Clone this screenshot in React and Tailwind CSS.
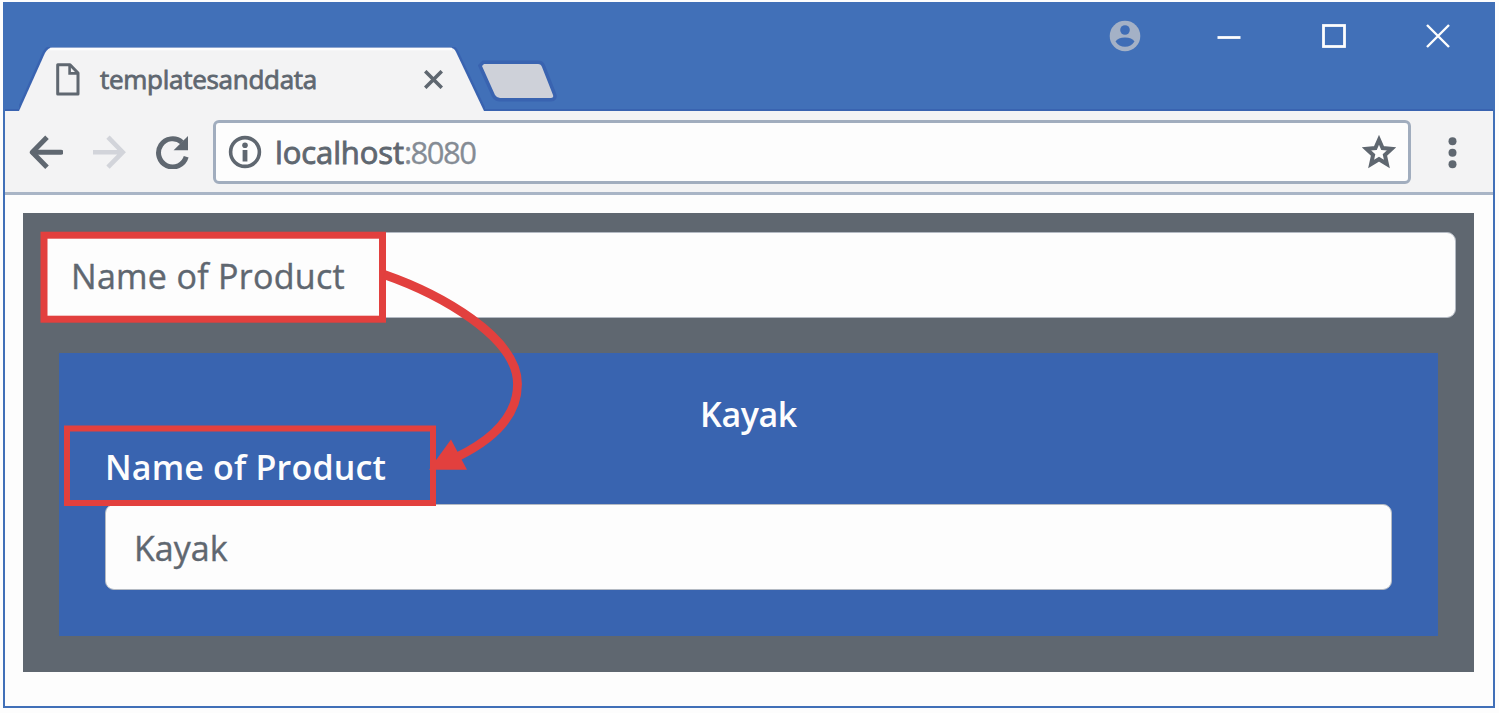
import React from "react";

function Tab() {
  return (
    <div className="relative ml-[14px] flex h-[64px] w-[466px] items-center">
      <svg className="absolute top-0 left-0" width="466" height="64" viewBox="0 0 466 64">
        <path d="M0 64 L26 6 Q29 0.8 33 0.8 H431 Q435 0.8 437 5 L465 64 Z" fill="#f3f3f4" stroke="#3963b0" strokeWidth="5" paintOrder="stroke" />
        <path d="M31 2 H433" stroke="#fdfdfd" strokeWidth="2.4" />
      </svg>
      <div className="relative flex w-full items-center">
        <svg className="ml-[37px] shrink-0" width="24" height="33" viewBox="0 0 24 33" fill="none" stroke="#5f6770" strokeWidth="3">
          <path d="M1.7 1.7 H14 L22 10 V31 H1.7 Z" strokeLinejoin="round" />
          <path d="M13.6 2 V10.4 H22" strokeWidth="2.6" />
        </svg>
        <span className="ml-[20px] w-[216px] text-[26px] leading-[32px] tracking-[-0.28px] whitespace-nowrap text-[#5f6770] [-webkit-text-stroke:0.8px_#5f6770]">templatesanddata</span>
        <svg className="ml-[108px] shrink-0" width="19" height="19" viewBox="0 0 19 19" stroke="#5f6770" strokeWidth="3.6">
          <path d="M1.2 1.2 L17.8 17.8 M17.8 1.2 L1.2 17.8" />
        </svg>
      </div>
    </div>
  );
}

function TitleBar() {
  return (
    <div className="flex h-[107px] items-end border-b-2 border-[#3963b0] bg-[#4170b8]">
      <div className="-mb-[2px] flex items-end">
        <Tab />
        <svg className="mb-[9px] -ml-[7px]" width="80" height="42" viewBox="0 0 80 42">
          <path d="M6 4 H60 Q63 4 64 7 L75 35 Q76 38 73 38 H22 Q19 38 17 35 L4 6 Z" fill="#ced1d9" stroke="#3963b0" strokeWidth="7" paintOrder="stroke" />
        </svg>
      </div>
      <div className="mr-[43px] mb-[57px] ml-auto flex items-center">
        <svg width="32" height="32" viewBox="0 0 32 32">
          <circle cx="16" cy="16" r="15.3" fill="#a4b1c6" />
          <circle cx="16" cy="10" r="4.8" fill="#3f6db6" />
          <path d="M6.5 21.5 Q9 17.6 16 17.6 Q23 17.6 25.5 21.5 Q22 26.8 16 26.8 Q10 26.8 6.5 21.5 Z" fill="#3f6db6" />
        </svg>
        <svg className="ml-[76px]" width="24" height="24" viewBox="0 0 24 24" stroke="#fdfdfd" strokeWidth="2.8"><path d="M0.5 13.5 H23.5" /></svg>
        <svg className="ml-[81px]" width="24" height="24" viewBox="0 0 24 24" fill="none" stroke="#fdfdfd" strokeWidth="2.8"><rect x="1.5" y="1.5" width="21" height="21" /></svg>
        <svg className="ml-[80px]" width="24" height="24" viewBox="0 0 24 24" stroke="#fdfdfd" strokeWidth="2.4"><path d="M1 1 L23 23 M23 1 L1 23" /></svg>
      </div>
    </div>
  );
}

function Toolbar() {
  return (
    <div className="flex h-[84px] items-center border-b-[3px] border-[#a9b5c6] bg-[#f3f3f4] text-[#5f6770]">
      <svg className="ml-[24px]" width="34" height="34" viewBox="0 0 34 34" fill="none" stroke="currentColor" strokeWidth="5" strokeLinejoin="round">
        <path d="M32 17.2 H4" strokeLinecap="round" />
        <path d="M18 2.2 L3.3 17.2 L18 32.2" />
      </svg>
      <svg className="ml-[29px] text-[#d2d4da]" width="34" height="34" viewBox="0 0 34 34" fill="none" stroke="currentColor" strokeWidth="4.6">
        <path d="M1 17.2 H30 M16 2.2 L30.7 17.2 L16 32.2" />
      </svg>
      <svg className="ml-[29px]" width="34" height="34" viewBox="0 0 34 34">
        <path d="M31.2 21.8 A14.1 14.1 0 1 1 27 7.3" fill="none" stroke="currentColor" strokeWidth="5" />
        <path d="M33 1 V15.2 H18.6 Z" fill="currentColor" />
      </svg>
      <div className="ml-[24px] flex h-[64px] w-[1198px] items-center rounded-[6px] border-[3px] border-[#a1adbe] bg-[#fdfdfd]">
        <svg className="ml-[12px] shrink-0" width="34" height="34" viewBox="0 0 34 34">
          <circle cx="17" cy="17" r="14.4" fill="none" stroke="currentColor" strokeWidth="3.6" />
          <circle cx="17" cy="10.2" r="2.8" fill="currentColor" />
          <path d="M17 15 V26.5" stroke="currentColor" strokeWidth="4.8" />
        </svg>
        <span className="ml-[13px] text-[31px] leading-[40px] whitespace-nowrap">
          <span className="tracking-[-0.1px] [-webkit-text-stroke:0.9px_#5f6770]">localhost</span>
          <span className="tracking-[-1.5px] text-[#858c95] [-webkit-text-stroke:0.3px_#858c95]">:8080</span>
        </span>
        <svg className="mr-[12px] ml-auto shrink-0" width="34" height="34" viewBox="0 0 34 34" fill="none" stroke="currentColor" strokeWidth="4">
          <path d="M17 4.8 L20.6 13 L29.6 13.8 L22.9 19.9 L24.9 29 L17 24.2 L9.1 29 L11.1 19.9 L4.4 13.8 L13.4 13 Z" />
        </svg>
      </div>
      <svg className="mt-[3px] ml-[37px]" width="9" height="32" viewBox="0 0 9 32" fill="currentColor">
        <circle cx="4.5" cy="4.3" r="4" />
        <circle cx="4.5" cy="15.8" r="4" />
        <circle cx="4.5" cy="27.3" r="4" />
      </svg>
    </div>
  );
}

function Annotations() {
  return (
    <svg className="pointer-events-none absolute top-0 left-0" width="1499" height="713" viewBox="0 0 1499 713" fill="none" stroke="#e2403e">
      <rect x="44" y="235.2" width="338.5" height="84" strokeWidth="7" />
      <rect x="67" y="428.5" width="366" height="74.5" strokeWidth="6" />
      <path d="M384 274.5 C440 294 517.5 337 517.5 384 C517.5 418 490 441 457 457" strokeWidth="8.8" />
      <path d="M429 469.8 L451 439.5 L467 469.8 Z" fill="#e2403e" stroke="none" />
    </svg>
  );
}

export default function App() {
  return (
    <div className="relative h-[713px] w-[1499px] overflow-hidden bg-[#fdfdfd] pt-[2px] pl-[3px] font-['Open_Sans','Noto_Sans',sans-serif]">
      <div className="h-[706px] w-[1492px] border-2 border-[#4170b8]">
        <TitleBar />
        <Toolbar />
        <main className="mt-[18px] ml-[18px] h-[459px] w-[1451px] bg-[#5f6770] px-[18px] pt-[19px]">
          <div className="flex h-[86px] items-center rounded-[9px] border border-[#b4bac3] bg-[#fdfdfd] pt-[2px] pl-[29px] text-[34px] text-[#5f6770]">
            <span className="tracking-[0.3px] whitespace-nowrap [-webkit-text-stroke:0.4px_#5f6770]">Name of Product</span>
          </div>
          <section className="mx-[18px] mt-[35px] h-[283px] bg-[#3964b0] px-[46px] pt-[35px]">
            <h4 className="text-center text-[34px] leading-[52px] font-semibold tracking-[-0.4px] text-[#fdfdfd]">Kayak</h4>
            <div className="h-[64px] text-[34px] leading-[54px] font-semibold tracking-[0.18px] whitespace-nowrap text-[#fdfdfd]">
              <span>Name of Product</span>
            </div>
            <div className="flex h-[86px] items-center rounded-[9px] border border-[#b4bac3] bg-[#fdfdfd] pt-[2px] pl-[28px] text-[34px] text-[#5f6770]">
              <span className="[-webkit-text-stroke:0.4px_#5f6770]">Kayak</span>
            </div>
          </section>
        </main>
      </div>
      <Annotations />
    </div>
  );
}
